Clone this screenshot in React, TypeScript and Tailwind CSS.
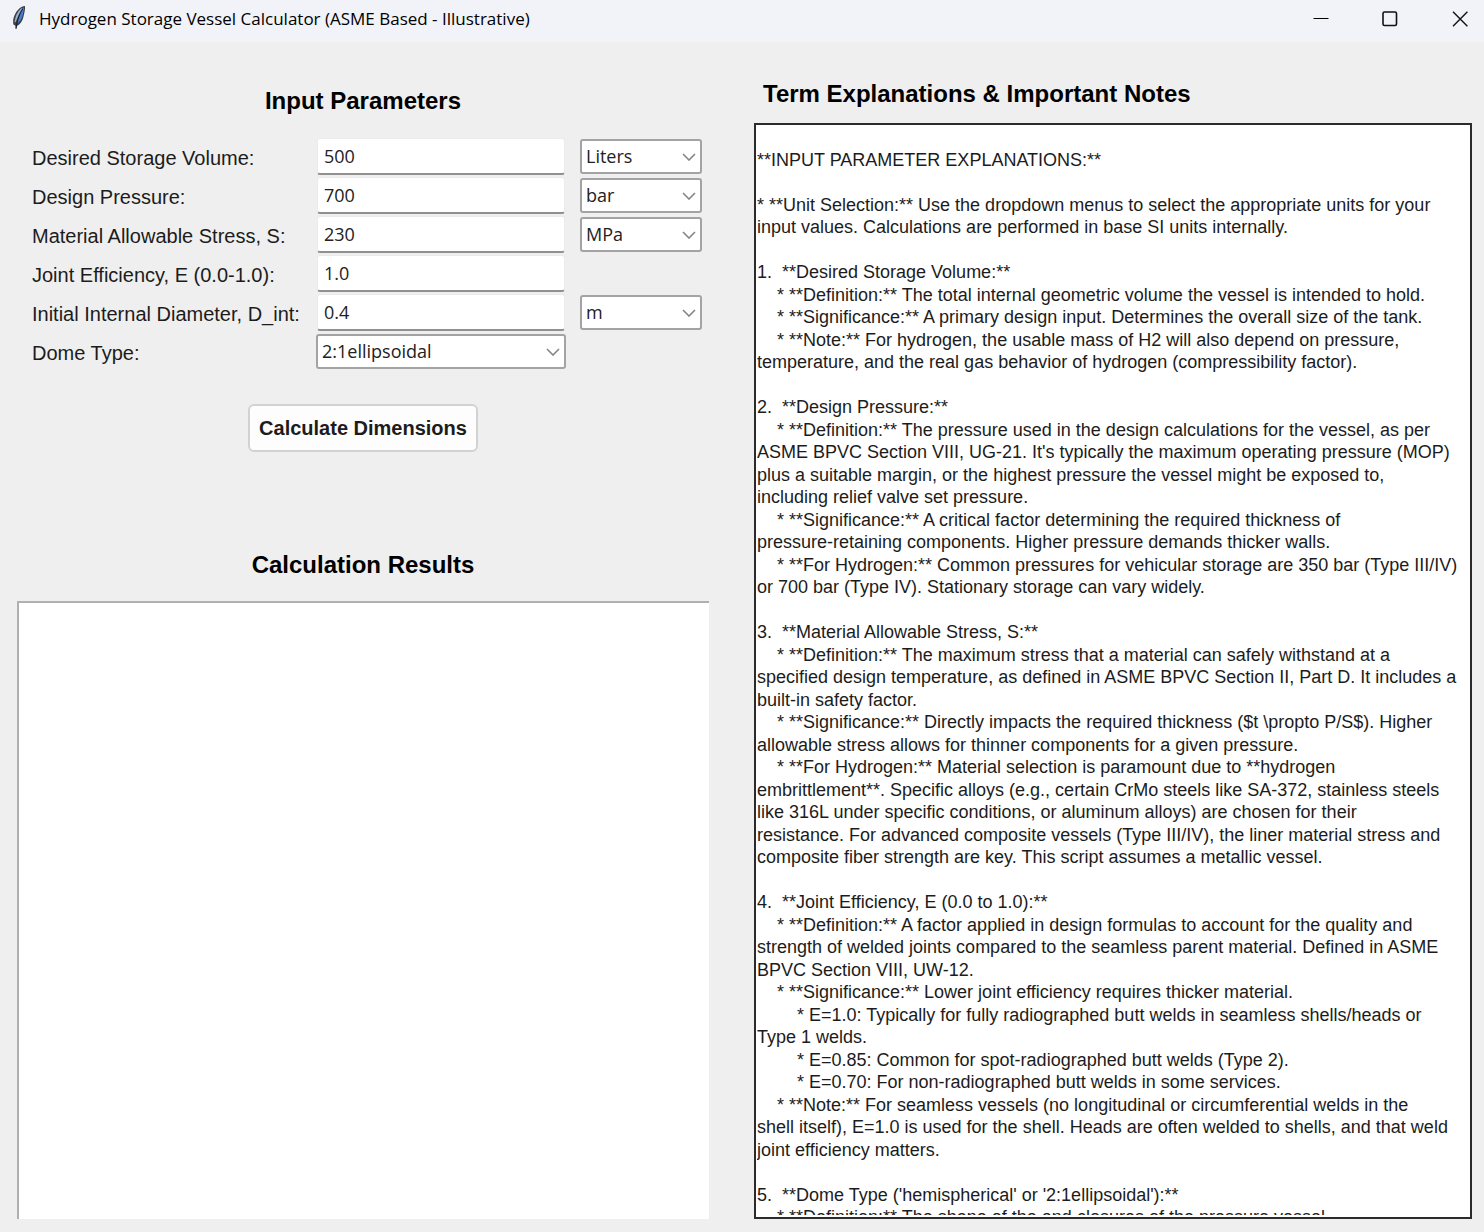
import React from "react";

type Field = {
  id: string;
  label: string;
  value: string;
  units?: string[];
};

const fields: Field[] = [
  { id: "volume", label: "Desired Storage Volume:", value: "500", units: ["Liters", "m³"] },
  { id: "pressure", label: "Design Pressure:", value: "700", units: ["bar", "MPa", "psi"] },
  { id: "stress", label: "Material Allowable Stress, S:", value: "230", units: ["MPa", "psi"] },
  { id: "efficiency", label: "Joint Efficiency, E (0.0-1.0):", value: "1.0" },
  { id: "diameter", label: "Initial Internal Diameter, D_int:", value: "0.4", units: ["m", "mm"] },
];

const notes = String.raw`
**INPUT PARAMETER EXPLANATIONS:**

* **Unit Selection:** Use the dropdown menus to select the appropriate units for your
input values. Calculations are performed in base SI units internally.

1.  **Desired Storage Volume:**
    * **Definition:** The total internal geometric volume the vessel is intended to hold.
    * **Significance:** A primary design input. Determines the overall size of the tank.
    * **Note:** For hydrogen, the usable mass of H2 will also depend on pressure,
temperature, and the real gas behavior of hydrogen (compressibility factor).

2.  **Design Pressure:**
    * **Definition:** The pressure used in the design calculations for the vessel, as per
ASME BPVC Section VIII, UG-21. It's typically the maximum operating pressure (MOP)
plus a suitable margin, or the highest pressure the vessel might be exposed to,
including relief valve set pressure.
    * **Significance:** A critical factor determining the required thickness of
pressure-retaining components. Higher pressure demands thicker walls.
    * **For Hydrogen:** Common pressures for vehicular storage are 350 bar (Type III/IV)
or 700 bar (Type IV). Stationary storage can vary widely.

3.  **Material Allowable Stress, S:**
    * **Definition:** The maximum stress that a material can safely withstand at a
specified design temperature, as defined in ASME BPVC Section II, Part D. It includes a
built-in safety factor.
    * **Significance:** Directly impacts the required thickness ($t \propto P/S$). Higher
allowable stress allows for thinner components for a given pressure.
    * **For Hydrogen:** Material selection is paramount due to **hydrogen
embrittlement**. Specific alloys (e.g., certain CrMo steels like SA-372, stainless steels
like 316L under specific conditions, or aluminum alloys) are chosen for their
resistance. For advanced composite vessels (Type III/IV), the liner material stress and
composite fiber strength are key. This script assumes a metallic vessel.

4.  **Joint Efficiency, E (0.0 to 1.0):**
    * **Definition:** A factor applied in design formulas to account for the quality and
strength of welded joints compared to the seamless parent material. Defined in ASME
BPVC Section VIII, UW-12.
    * **Significance:** Lower joint efficiency requires thicker material.
        * E=1.0: Typically for fully radiographed butt welds in seamless shells/heads or
Type 1 welds.
        * E=0.85: Common for spot-radiographed butt welds (Type 2).
        * E=0.70: For non-radiographed butt welds in some services.
    * **Note:** For seamless vessels (no longitudinal or circumferential welds in the
shell itself), E=1.0 is used for the shell. Heads are often welded to shells, and that weld
joint efficiency matters.

5.  **Dome Type ('hemispherical' or '2:1ellipsoidal'):**
    * **Definition:** The shape of the end closures of the pressure vessel.`;

function Feather() {
  return (
    <svg viewBox="0 0 16 26" className="h-[26px] w-4" aria-hidden="true">
      <path d="M14 1 C10.5 1.2 7 4 4.4 8.4 C2.4 12 1.6 16 2.4 19.6 L4.2 20.6 L5 24.5 L6.2 20.8 C9 19.6 11.4 16 12.4 12 C13.2 8.4 14.4 4.5 14 1Z" fill="#3a3f49" />
      <path d="M13 2.2 C11.4 4 9.6 7 8.4 11 L6 18.6 C8.8 17.2 10.8 13.8 11.6 10.4 C12.2 7.6 13.2 4.8 13 2.2Z" fill="#3f7fd6" />
      <path d="M11.8 2.6 C8.6 4.2 6 8 4.6 12 L3.4 17.6 L4.6 17 L8 9.2Z" fill="#9fb2cc" />
      <path d="M11.8 4 C8.6 8.6 6.4 14 5 23.6" fill="none" stroke="#181c22" strokeWidth="1" />
    </svg>
  );
}

function Select({ id, label, options, className }: { id: string; label?: string; options: string[]; className: string }) {
  return (
    <div className={className}>
      <select
        id={id}
        aria-label={label}
        className="h-[35px] w-full appearance-none rounded-[3px] border-2 border-[#a3a3a3] bg-white pb-px pl-1 text-lg leading-6 text-[#222]"
      >
        {options.map((o) => (
          <option key={o}>{o}</option>
        ))}
      </select>
      <svg viewBox="0 0 14 8" className="pointer-events-none absolute top-[14px] right-[6px] h-2 w-[14px]" aria-hidden="true">
        <path d="M1 1 L7 7 L13 1" fill="none" stroke="#858585" strokeWidth="1.6" />
      </svg>
    </div>
  );
}

export default function App() {
  return (
    <div className="flex h-screen flex-col overflow-hidden bg-[#efefef] font-['Liberation_Sans',Arial,sans-serif] text-[#1c1c1c]">
      <header className="flex h-[42px] shrink-0 items-start bg-[#f1f3f8] pl-[11px] font-['Open_Sans','Segoe_UI',sans-serif] text-black">
        <div className="pt-[5px]">
          <Feather />
        </div>
        <h1 className="pt-[7px] pl-3 text-[17px] leading-6">Hydrogen Storage Vessel Calculator (ASME Based - Illustrative)</h1>
        <div className="ml-auto flex h-[37px]">
          <button aria-label="Minimize" className="flex w-[70px] items-center justify-center">
            <svg viewBox="0 0 16 16" className="size-4" aria-hidden="true">
              <path d="M0.5 7.5 H15.5" stroke="#000" strokeWidth="1" />
            </svg>
          </button>
          <button aria-label="Maximize" className="flex w-[68px] items-center justify-center">
            <svg viewBox="0 0 16 16" className="size-4" aria-hidden="true">
              <rect x="1" y="1" width="13.5" height="13.5" rx="1.5" fill="none" stroke="#111" strokeWidth="1.6" />
            </svg>
          </button>
          <button aria-label="Close" className="flex w-[60px] items-center justify-center pl-3">
            <svg viewBox="0 0 16 16" className="size-4" aria-hidden="true">
              <path d="M1 0.8 L15.4 15.2 M15.4 0.8 L1 15.2" stroke="#111" strokeWidth="1.4" />
            </svg>
          </button>
        </div>
      </header>

      <main className="grid min-h-0 flex-1 grid-cols-[692fr_718fr] gap-[45px] pr-3 pb-[13px] pl-[17px]">
        <section className="flex min-h-0 flex-col">
          <h2 className="pt-[43px] text-center text-2xl leading-8 font-bold text-black">Input Parameters</h2>
          <form className="mt-[21px] flex flex-col pr-[7px] pl-[15px]" onSubmit={(e) => e.preventDefault()}>
            {fields.map((f) => (
              <div key={f.id} className="flex h-[39px] items-start">
                <label htmlFor={f.id} className="min-w-0 flex-1 pt-2 text-xl leading-6 whitespace-nowrap">
                  {f.label}
                </label>
                <input
                  id={f.id}
                  defaultValue={f.value}
                  className="h-[37px] w-[248px] rounded-[3px] border border-b-2 border-[#ebebeb] border-b-[#909090] bg-white px-[6px] font-['Open_Sans','Segoe_UI',sans-serif] text-lg text-[#222]"
                />
                {f.units ? (
                  <Select
                    id={`${f.id}-unit`}
                    label={`${f.label} unit`}
                    options={f.units}
                    className="relative mt-px ml-[15px] w-[122px] font-['Open_Sans','Segoe_UI',sans-serif]"
                  />
                ) : (
                  <div className="ml-[15px] w-[122px]" />
                )}
              </div>
            ))}
            <div className="flex h-10 items-start">
              <label htmlFor="dome" className="min-w-0 flex-1 pt-2 text-xl leading-6">
                Dome Type:
              </label>
              <Select
                id="dome"
                options={["2:1ellipsoidal", "hemispherical"]}
                className="relative mt-px mr-[136px] w-[250px] font-['Open_Sans','Segoe_UI',sans-serif]"
              />
            </div>
            <button
              type="submit"
              className="mt-[31px] mr-2 h-12 self-center rounded-md border-2 border-[#d2d2d2] bg-[#fdfdfd] px-[9px] text-xl font-bold whitespace-nowrap"
            >
              Calculate Dimensions
            </button>
          </form>
          <h2 className="mt-[97px] text-center text-2xl leading-8 font-bold text-black" id="results-title">
            Calculation Results
          </h2>
          <textarea
            aria-labelledby="results-title"
            readOnly
            className="mt-[20px] block min-h-0 w-full flex-1 resize-none border-t-2 border-l-2 border-[#b0b0b0] bg-white p-1 text-lg outline-none"
          />
        </section>

        <section className="flex min-h-0 min-w-0 flex-col">
          <h2 className="pt-9 pl-[9px] text-2xl leading-8 font-bold text-black">Term Explanations &amp; Important Notes</h2>
          <div className="mt-[13px] min-h-0 flex-1 overflow-hidden border-2 border-[#2b2b2b] bg-white px-px pt-px pb-[2px]">
            <div className="h-full overflow-hidden text-lg leading-tight whitespace-pre">{notes}</div>
          </div>
        </section>
      </main>
    </div>
  );
}
